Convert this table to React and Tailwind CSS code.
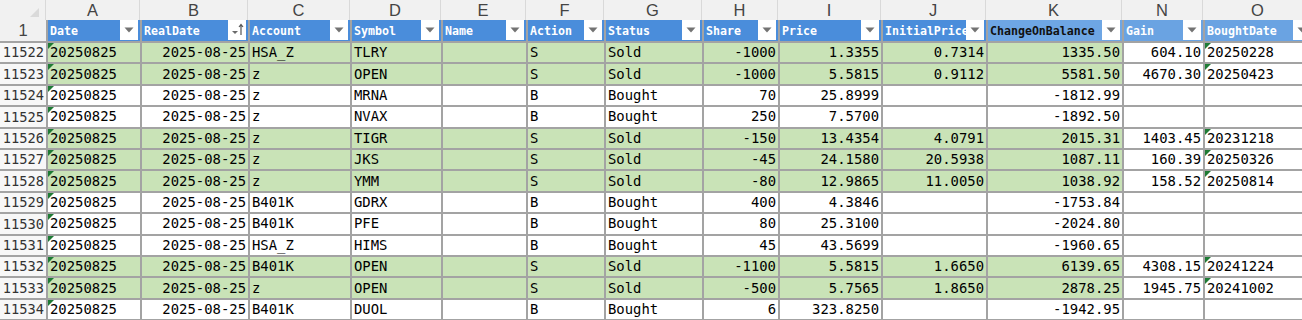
import React from 'react'

const cols = [
  { key: 'A', w: 94, name: 'Date', align: 'left' },
  { key: 'B', w: 108, name: 'RealDate', align: 'right', sort: true },
  { key: 'C', w: 102, name: 'Account', align: 'left' },
  { key: 'D', w: 91, name: 'Symbol', align: 'left' },
  { key: 'E', w: 85, name: 'Name', align: 'left' },
  { key: 'F', w: 78, name: 'Action', align: 'left' },
  { key: 'G', w: 98, name: 'Status', align: 'left' },
  { key: 'H', w: 76, name: 'Share', align: 'right' },
  { key: 'I', w: 103, name: 'Price', align: 'right' },
  { key: 'J', w: 105, name: 'InitialPrice', align: 'right' },
  { key: 'K', w: 136, name: 'ChangeOnBalance', align: 'right', hl: 'k' },
  { key: 'N', w: 81, name: 'Gain', align: 'right', hl: 'light' },
  { key: 'O', w: 110, name: 'BoughtDate', align: 'left', hl: 'light' },
]

const rows = [
  [11522, 'HSA_Z', 'TLRY', 'S', 'Sold', '-1000', '1.3355', '0.7314', '1335.50', '604.10', '20250228', true],
  [11523, 'z', 'OPEN', 'S', 'Sold', '-1000', '5.5815', '0.9112', '5581.50', '4670.30', '20250423', true],
  [11524, 'z', 'MRNA', 'B', 'Bought', '70', '25.8999', '', '-1812.99', '', '', false],
  [11525, 'z', 'NVAX', 'B', 'Bought', '250', '7.5700', '', '-1892.50', '', '', false],
  [11526, 'z', 'TIGR', 'S', 'Sold', '-150', '13.4354', '4.0791', '2015.31', '1403.45', '20231218', true],
  [11527, 'z', 'JKS', 'S', 'Sold', '-45', '24.1580', '20.5938', '1087.11', '160.39', '20250326', true],
  [11528, 'z', 'YMM', 'S', 'Sold', '-80', '12.9865', '11.0050', '1038.92', '158.52', '20250814', true],
  [11529, 'B401K', 'GDRX', 'B', 'Bought', '400', '4.3846', '', '-1753.84', '', '', false],
  [11530, 'B401K', 'PFE', 'B', 'Bought', '80', '25.3100', '', '-2024.80', '', '', false],
  [11531, 'HSA_Z', 'HIMS', 'B', 'Bought', '45', '43.5699', '', '-1960.65', '', '', false],
  [11532, 'B401K', 'OPEN', 'S', 'Sold', '-1100', '5.5815', '1.6650', '6139.65', '4308.15', '20241224', true],
  [11533, 'z', 'OPEN', 'S', 'Sold', '-500', '5.7565', '1.8650', '2878.25', '1945.75', '20241002', true],
  [11534, 'B401K', 'DUOL', 'B', 'Bought', '6', '323.8250', '', '-1942.95', '', '', false],
]

const mono = 'font-["DejaVu_Sans_Mono","Liberation_Mono",monospace]'

function FilterButton({ sort }) {
  return (
    <div className="mb-[1px] mr-[2px] flex h-[20px] w-[18px] shrink-0 items-center justify-center bg-white">
      {sort ? (
        <svg width="16" height="14" viewBox="0 0 16 14">
          <path d="M3 8h6l-3 3z" fill="#6b6b6b" />
          <path d="M12 12V2M10 4l2-2.5L14 4" stroke="#555" strokeWidth="1.2" fill="none" />
        </svg>
      ) : (
        <svg width="10" height="6" viewBox="0 0 10 6">
          <path d="M0.5 0.5h9L5 5.5z" fill="#737373" />
        </svg>
      )}
    </div>
  )
}

function Marker() {
  return (
    <svg width="6" height="6" viewBox="0 0 6 6" className="absolute left-0 top-0">
      <path d="M0 0h6L0 6z" fill="#1e7b34" />
    </svg>
  )
}

export default function App() {
  return (
    <div className={`h-[320px] w-[1302px] overflow-hidden bg-white ${mono}`}>
      {/* column letters */}
      <div className="flex h-[20px] bg-[#f1f1f1]">
        <div className="relative w-[46px] shrink-0 border-r border-[#d9d9d9]">
          <svg width="9" height="9" viewBox="0 0 9 9" className="absolute bottom-[3px] right-[6px]">
            <path d="M9 0v9H0z" fill="#dadada" />
          </svg>
        </div>
        {cols.map((c) => (
          <div
            key={c.key}
            style={{ width: c.w }}
            className='flex shrink-0 items-center justify-center border-r border-[#d9d9d9] font-["Liberation_Sans",sans-serif] text-[16.5px] text-[#444]'
          >
            {c.key}
          </div>
        ))}
      </div>
      {/* header row */}
      <div className="flex h-[23px] border-b-2 border-[#a3a3a3]">
        <div className='flex w-[46px] shrink-0 items-center justify-center bg-[#f1f1f1] font-["Liberation_Sans",sans-serif] text-[16.5px] text-[#444]'>
          1
        </div>
        {cols.map((c) => (
          <div
            key={c.key}
            style={{ width: c.w }}
            className={`flex shrink-0 items-end justify-between border-l-2 border-[#a3a3a3] ${
              c.hl === 'k' ? 'bg-[#6ea6e4] text-[#111]' : c.hl === 'light' ? 'bg-[#6aa3e2] text-white' : 'bg-[#4a8ddb] text-white'
            }`}
          >
            <span className="overflow-hidden whitespace-nowrap pb-[3px] pl-[2px] text-[11.6px] font-bold leading-[14px]">{c.name}</span>
            <FilterButton sort={c.sort} />
          </div>
        ))}
      </div>
      {/* data rows */}
      {rows.map((r) => {
        const [num, acct, sym, act, status, share, price, init, chg, gain, bought, green] = r
        const vals = ['20250825', '2025-08-25', acct, sym, '', act, status, share, price, init, chg, gain, bought]
        return (
          <div key={num} className="flex h-[21.4px] border-b-2 border-[#a3a3a3]">
            <div className="flex w-[46px] shrink-0 items-center justify-end bg-[#f7f7f7] pr-[2px] text-[13.7px] text-[#333]">
              {num}
            </div>
            {vals.map((v, i) => {
              const c = cols[i]
              const fill = green && i <= 10 ? 'bg-[#c9e3b7]' : 'bg-white'
              const mark = i === 0 || (i === 12 && v)
              return (
                <div
                  key={c.key}
                  style={{ width: c.w }}
                  className={`relative flex shrink-0 items-center overflow-hidden whitespace-nowrap border-l-2 border-[#a3a3a3] px-[2px] pt-[1px] text-[13.9px] leading-none text-black ${fill} ${
                    c.align === 'right' ? 'justify-end' : 'justify-start'
                  }`}
                >
                  {mark ? <Marker /> : null}
                  {v}
                </div>
              )
            })}
          </div>
        )
      })}
    </div>
  )
}
